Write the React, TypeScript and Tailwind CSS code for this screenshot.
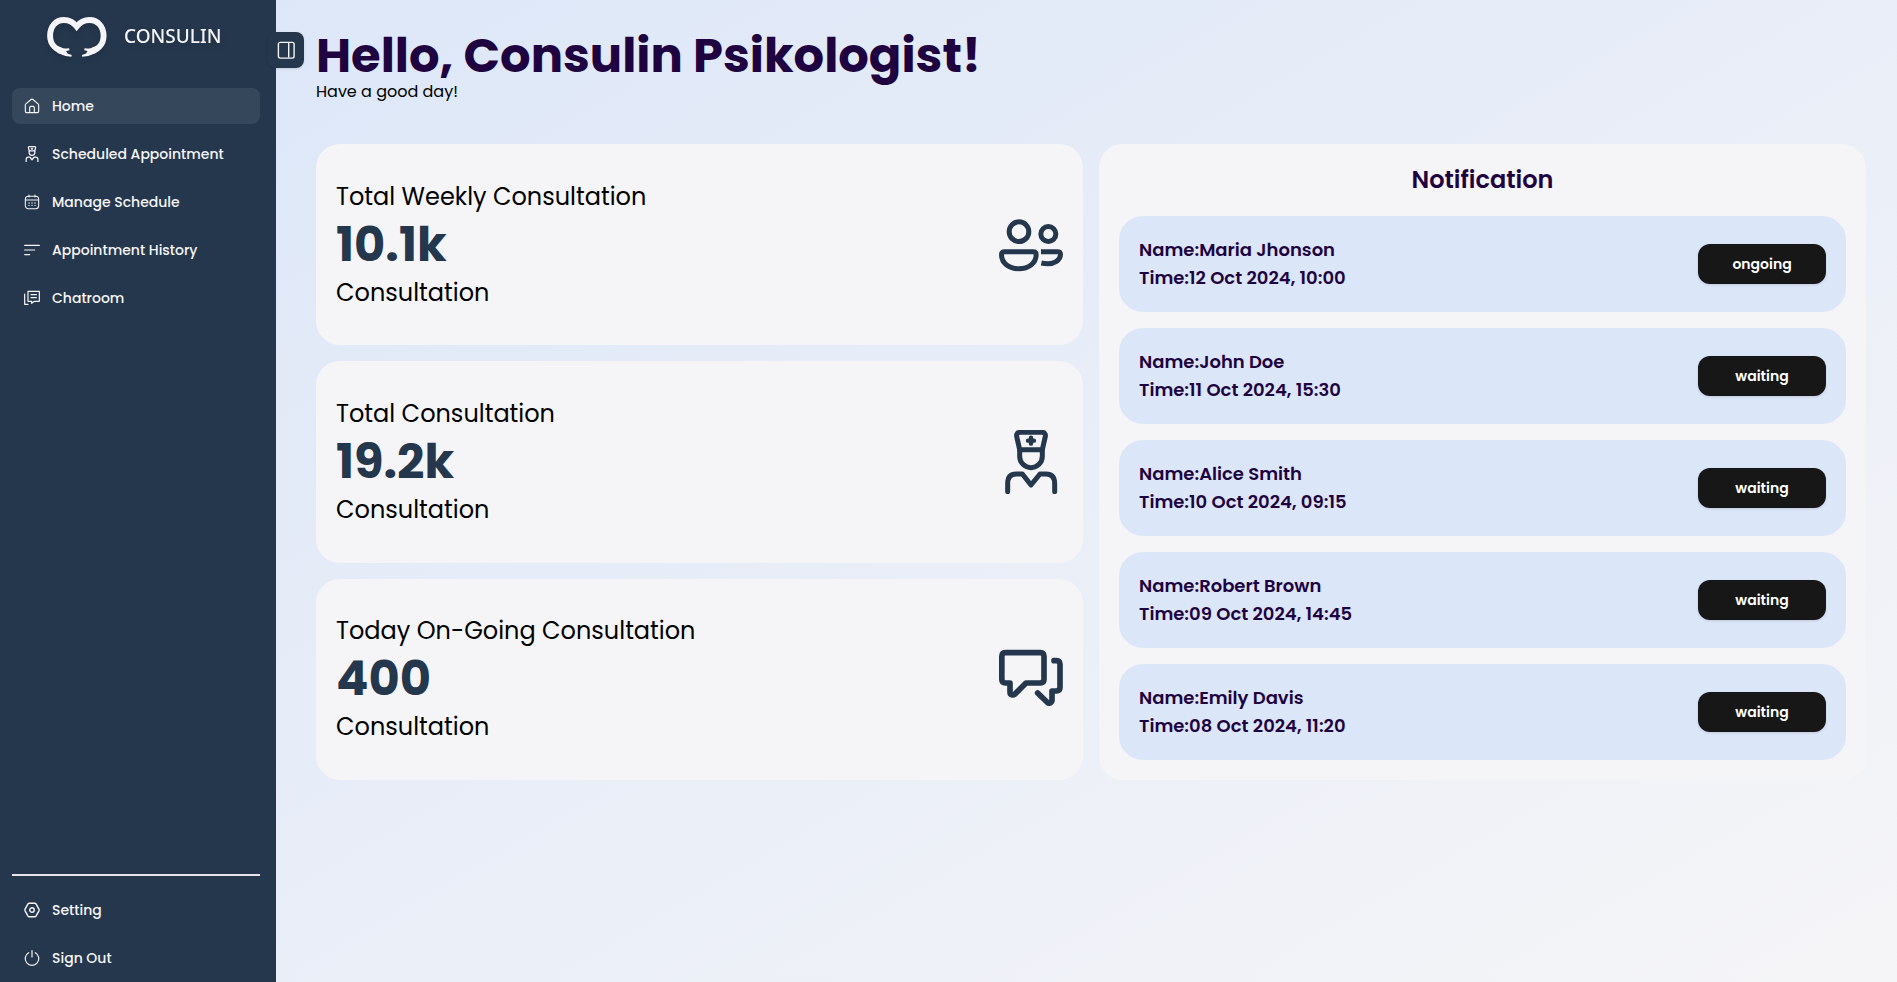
import type { ReactNode } from "react";

type IconProps = { className?: string };

function Logo() {
  return (
    <svg viewBox="136 44 190 134" className="h-11 w-16 drop-shadow-md" fill="none" stroke="#f5f5f7" aria-hidden="true">
      <path d="M194 156 C168 151 149 134 149 107 C149 79 166 59 191 59 C208 59 220 66 230 79 C240 66 252 59 269 59 C294 59 312 79 312 107 C312 134 294 151 268 156" strokeWidth="18" />
      <path d="M168 138 L182 142 L190 147 L207 145 L208 151 L198 154 L202 161 L215 166 L214 171 L196 169 L172 160 Z" fill="#f5f5f7" stroke="none" />
      <path d="M293 138 L279 142 L271 147 L254 145 L253 151 L263 154 L259 161 L246 166 L247 171 L265 169 L289 160 Z" fill="#f5f5f7" stroke="none" />
    </svg>
  );
}

function HomeIcon({ className }: IconProps) {
  return (
    <svg viewBox="0 0 24 24" className={className} fill="none" stroke="currentColor" strokeWidth="1.7" strokeLinejoin="round" aria-hidden="true">
      <path d="M2 10.5 Q2 9.5 2.8 8.8 L10.6 2.2 Q12 1.2 13.4 2.2 L21.2 8.8 Q22 9.5 22 10.5 V20 Q22 22 20 22 H4 Q2 22 2 20 Z" />
      <path d="M8.5 22 V14.5 Q8.5 12.5 10.5 12.5 H13.5 Q15.5 12.5 15.5 14.5 V22" />
    </svg>
  );
}

function DoctorIcon({ className }: IconProps) {
  return (
    <svg viewBox="57 45 192 192" className={className} fill="none" stroke="currentColor" strokeWidth="15" strokeLinecap="round" strokeLinejoin="round" aria-hidden="true">
      <path d="M121 52 H185 Q198 52 196 64 L187 104 H119 L110 64 Q108 52 121 52 Z" />
      <path d="M119 104 V124 A34 34 0 0 0 187 124 V104" />
      <path d="M153 68 V86 M144 77 H162" strokeWidth="13" />
      <path d="M83 230 V206 Q83 177 108 177 H127 L153 210 L180 177 H198 Q224 177 224 206 V230" />
    </svg>
  );
}

function CalendarIcon({ className }: IconProps) {
  return (
    <svg viewBox="0 0 24 24" className={className} fill="none" stroke="currentColor" strokeWidth="1.6" strokeLinecap="round" aria-hidden="true">
      <rect x="2" y="3.5" width="20" height="18.5" rx="4.5" />
      <path d="M7.5 1.5 V4.5 M16.5 1.5 V4.5 M2.5 9 H21.5" />
      <path d="M7.5 13.5 H7.6 M12 13.5 H12.1 M16.5 13.5 H16.6 M7.5 17 H7.6 M12 17 H12.1 M16.5 17 H16.6" strokeWidth="2" />
    </svg>
  );
}

function HistoryIcon({ className }: IconProps) {
  return (
    <svg viewBox="0 0 24 24" className={className} fill="none" stroke="currentColor" strokeWidth="1.8" strokeLinecap="round" aria-hidden="true">
      <path d="M1 5.2 H23 M1 12 H16 M1 18.8 H8.5" />
    </svg>
  );
}

function ChatroomIcon({ className }: IconProps) {
  return (
    <svg viewBox="0 0 24 24" className={className} fill="none" stroke="currentColor" strokeWidth="1.8" strokeLinecap="round" strokeLinejoin="round" aria-hidden="true">
      <path d="M6 2 H23 V17 H15.5 L11.5 20 V17 H6 Z" />
      <path d="M10.5 7 H18.5 M10.5 11.5 H18.5" />
      <path d="M1 6 V21.5 H6" />
    </svg>
  );
}

function SettingIcon({ className }: IconProps) {
  return (
    <svg viewBox="0 0 24 24" className={className} fill="none" stroke="currentColor" strokeWidth="2.1" strokeLinejoin="round" aria-hidden="true">
      <path d="M7.8 1.8 H16.2 Q17.4 1.8 18 2.8 L22.4 10.8 Q23 12 22.4 13.2 L18 21.2 Q17.4 22.2 16.2 22.2 H7.8 Q6.6 22.2 6 21.2 L1.6 13.2 Q1 12 1.6 10.8 L6 2.8 Q6.6 1.8 7.8 1.8 Z" />
      <circle cx="12" cy="12" r="3.4" />
    </svg>
  );
}

function PowerIcon({ className }: IconProps) {
  return (
    <svg viewBox="0 0 24 24" className={className} fill="none" stroke="currentColor" strokeWidth="1.8" strokeLinecap="round" aria-hidden="true">
      <path d="M12 1 V10.5" />
      <path d="M7 4 A10.2 10.2 0 1 0 17 4" />
    </svg>
  );
}

function PanelIcon({ className }: IconProps) {
  return (
    <svg viewBox="0 0 16 16" className={className} fill="none" stroke="currentColor" strokeWidth="1.4" aria-hidden="true">
      <rect x="0.4" y="0.4" width="15.7" height="15.7" rx="1.8" />
      <path d="M10.7 0.6 V15.6" />
    </svg>
  );
}

function PeopleIcon({ className }: IconProps) {
  return (
    <svg viewBox="0 0 192 192" className={className} fill="none" stroke="currentColor" strokeWidth="15" aria-hidden="true">
      <circle cx="60" cy="56" r="29.5" />
      <circle cx="148" cy="63" r="22.5" />
      <path d="M17 116 H102 Q111.5 116 111.5 125 C111.5 151 88 167 59.5 167 C31 167 7.5 151 7.5 125 Q7.5 116 17 116 Z" />
      <path d="M126 116 H175 Q184.5 116 184.5 124 C184.5 143 165 152 147 152 Q136 152 127 150" />
    </svg>
  );
}

function ChatIcon({ className }: IconProps) {
  return (
    <svg viewBox="57 38 192 192" className={className} fill="none" stroke="currentColor" strokeWidth="17" strokeLinecap="round" strokeLinejoin="round" aria-hidden="true">
      <path d="M76 55 H181 Q192 55 192 66 V135 Q192 146 181 146 H138 L105 179 Q99 184 92 180 Q90 178 90 174 V146 H76 Q65.5 146 65.5 135 V66 Q65.5 55 76 55 Z" />
      <path d="M222 79 H229 Q240 79 240 90 V159 Q240 170 229 170 H216 V199 Q213 208 204 206 L173 176" />
    </svg>
  );
}

const navItems = [
  { label: "Home", Icon: HomeIcon },
  { label: "Scheduled Appointment", Icon: DoctorIcon },
  { label: "Manage Schedule", Icon: CalendarIcon },
  { label: "Appointment History", Icon: HistoryIcon },
  { label: "Chatroom", Icon: ChatroomIcon },
];

const stats = [
  { title: "Total Weekly Consultation", value: "10.1k", Icon: PeopleIcon },
  { title: "Total Consultation", value: "19.2k", Icon: DoctorIcon },
  { title: "Today On-Going Consultation", value: "400", Icon: ChatIcon },
];

const notifications = [
  { name: "Maria Jhonson", time: "12 Oct 2024, 10:00", status: "ongoing" },
  { name: "John Doe", time: "11 Oct 2024, 15:30", status: "waiting" },
  { name: "Alice Smith", time: "10 Oct 2024, 09:15", status: "waiting" },
  { name: "Robert Brown", time: "09 Oct 2024, 14:45", status: "waiting" },
  { name: "Emily Davis", time: "08 Oct 2024, 11:20", status: "waiting" },
];

function NavLink({ active = false, icon, children }: { active?: boolean; icon: ReactNode; children: ReactNode }) {
  return (
    <a
      href="#"
      aria-current={active ? "page" : undefined}
      className={`flex h-9 items-center gap-3 rounded-lg px-3 text-sm font-medium whitespace-nowrap ${active ? "bg-[#35475b]" : "hover:bg-[#35475b]"}`}
    >
      {icon}
      {children}
    </a>
  );
}

export default function App() {
  return (
    <div className="flex min-h-screen bg-linear-[150deg] from-[#dbe6f8] to-[#f5f5f7] font-['Poppins','Inter',sans-serif] text-black">
      <aside className="relative flex w-[276px] shrink-0 flex-col bg-[#25374d] pr-4 pb-1.5 pl-3 text-[#f5f5f7]">
        <div className="flex h-[76px] items-start gap-[15px] pt-[15px] pl-[33px]">
          <Logo />
          <span className="font-['Noto_Sans',sans-serif] text-[19px] leading-[42px] font-medium drop-shadow-md">CONSULIN</span>
        </div>
        <nav className="flex flex-col gap-3 pt-3">
          {navItems.map(({ label, Icon }, index) => (
            <NavLink key={label} active={index === 0} icon={<Icon className="size-4" />}>
              {label}
            </NavLink>
          ))}
        </nav>
        <div className="mt-auto flex flex-col gap-3 border-t-2 border-[#e5e7eb] pt-4">
          <NavLink icon={<SettingIcon className="size-4" />}>Setting</NavLink>
          <NavLink icon={<PowerIcon className="size-4" />}>Sign Out</NavLink>
        </div>
        <button
          type="button"
          aria-label="Toggle sidebar"
          className="absolute top-8 -right-7 flex size-9 items-center justify-center rounded-lg bg-[#25374d] shadow-sm"
        >
          <PanelIcon className="size-4 overflow-visible" />
        </button>
      </aside>

      <main className="flex min-w-0 flex-1 flex-col gap-10 pt-8 pr-[31px] pb-8 pl-10">
        <header>
          <h1 className="text-5xl leading-none font-bold text-[#1f0340]">Hello, Consulin Psikologist!</h1>
          <p className="text-base">Have a good day!</p>
        </header>

        <div className="grid grid-cols-2 gap-4">
          <div className="grid grid-rows-3 gap-4">
            {stats.map(({ title, value, Icon }) => (
              <section key={title} className="flex items-center justify-between rounded-3xl bg-[#f5f5f7] p-5">
                <div className="flex flex-col gap-2">
                  <h2 className="text-2xl">{title}</h2>
                  <p className="text-5xl leading-none font-bold text-[#25374d]">{value}</p>
                  <p className="text-2xl">Consultation</p>
                </div>
                <Icon className="size-16 text-[#25374d]" />
              </section>
            ))}
          </div>

          <section className="flex flex-col gap-5 rounded-3xl bg-[#f5f5f7] p-5 text-[#1f0340]">
            <h2 className="text-center text-2xl font-semibold">Notification</h2>
            <ul className="flex flex-col gap-4">
              {notifications.map(({ name, time, status }) => (
                <li key={name} className="flex h-24 items-center justify-between rounded-3xl bg-[#dbe6f8] px-5">
                  <div className="text-lg font-semibold">
                    <p>Name:{name}</p>
                    <p>Time:{time}</p>
                  </div>
                  <button type="button" className="h-10 w-32 rounded-xl bg-[#171717] text-sm font-semibold text-white shadow-sm">
                    {status}
                  </button>
                </li>
              ))}
            </ul>
          </section>
        </div>
      </main>
    </div>
  );
}
